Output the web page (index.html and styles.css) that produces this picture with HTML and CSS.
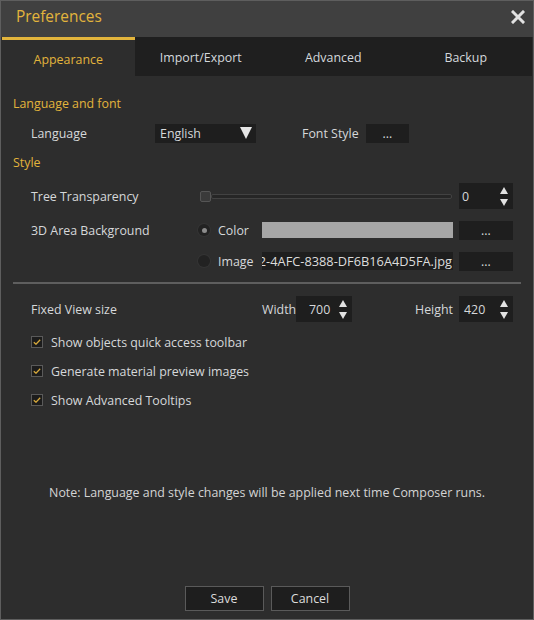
FILE: index.html
```html
<!DOCTYPE html>
<html>
<head>
<meta charset="utf-8">
<link rel="stylesheet" href="styles.css">
</head>
<body>
<div class="dialog">
  <div class="titlebar">
    <span class="title">Preferences</span>
    <svg class="close" width="14" height="14" viewBox="0 0 14 14"><path d="M2 2L12 12M12 2L2 12" stroke="#e2e2e2" stroke-width="3" stroke-linecap="square"/></svg>
  </div>
  <div class="tabs">
    <div class="tab active">Appearance</div>
    <div class="tab">Import/Export</div>
    <div class="tab">Advanced</div>
    <div class="tab">Backup</div>
  </div>
  <div class="content">
    <div class="section first">Language and font</div>
    <div class="row r-lang">
      <span class="label w-lang">Language</span>
      <div class="dropdown"><span>English</span><span class="tri"></span></div>
      <span class="label w-fs">Font Style</span>
      <div class="btn small">...</div>
    </div>
    <div class="section style">Style</div>
    <div class="row r-tree">
      <span class="label w-tree">Tree Transparency</span>
      <div class="slider"><span class="handle"></span><span class="track"></span></div>
      <div class="spin s-tree"><span>0</span><span class="arrows"><i class="up"></i><i class="down"></i></span></div>
    </div>
    <div class="row r-bg">
      <span class="label w-bg">3D Area Background</span>
      <span class="radio on"></span>
      <span class="label w-opt">Color</span>
      <div class="colorbar"></div>
      <div class="btn wide">...</div>
    </div>
    <div class="row r-img">
      <span class="label w-bg"></span>
      <span class="radio"></span>
      <span class="label w-opt">Image</span>
      <div class="field"><span>2-4AFC-8388-DF6B16A4D5FA.jpg</span></div>
      <div class="btn wide">...</div>
    </div>
    <div class="sep"></div>
    <div class="row r-fixed">
      <span class="label w-fixed">Fixed View size</span>
      <span class="label w-w">Width</span>
      <div class="spin s-w"><span>700</span><span class="arrows"><i class="up"></i><i class="down"></i></span></div>
      <span class="label w-h">Height</span>
      <div class="spin s-h"><span>420</span><span class="arrows"><i class="up"></i><i class="down"></i></span></div>
    </div>
    <div class="row check first-check"><span class="cb"><svg width="8" height="6" viewBox="0 0 8 6"><path d="M0.8 3.2L3 5.2L7.2 0.8" fill="none" stroke="#d8aa3c" stroke-width="1.3"/></svg></span><span class="label">Show objects quick access toolbar</span></div>
    <div class="row check"><span class="cb"><svg width="8" height="6" viewBox="0 0 8 6"><path d="M0.8 3.2L3 5.2L7.2 0.8" fill="none" stroke="#d8aa3c" stroke-width="1.3"/></svg></span><span class="label">Generate material preview images</span></div>
    <div class="row check"><span class="cb"><svg width="8" height="6" viewBox="0 0 8 6"><path d="M0.8 3.2L3 5.2L7.2 0.8" fill="none" stroke="#d8aa3c" stroke-width="1.3"/></svg></span><span class="label">Show Advanced Tooltips</span></div>
    <div class="note">Note: Language and style changes will be applied next time Composer runs.</div>
    <div class="spacer"></div>
    <div class="buttons">
      <div class="action">Save</div>
      <div class="action">Cancel</div>
    </div>
  </div>
</div>
</body>
</html>
```
FILE: styles.css
```css
html, body {
  margin: 0;
  padding: 0;
  background: #2d2d2d;
}
.dialog {
  width: 534px;
  height: 620px;
  box-sizing: border-box;
  border: 1px solid #5e5e5e;
  background: #2d2d2d;
  display: flex;
  flex-direction: column;
  font-family: "Open Sans", "Noto Sans", sans-serif;
  font-size: 12.4px;
  color: #d6d8da;
}
.titlebar {
  height: 36px;
  background: #404040;
  display: flex;
  align-items: center;
  justify-content: space-between;
  padding: 0 8px 5px 15px;
  box-sizing: border-box;
  flex-shrink: 0;
}
.title {
  color: #e2b43c;
  font-size: 15.4px;
}
.close {
  display: block;
  margin-top: 1px;
}
.tabs {
  display: flex;
  height: 39px;
  background: #1f1f1f;
  margin: 0 1px;
  flex-shrink: 0;
}
.tab {
  flex: 1;
  display: flex;
  align-items: center;
  justify-content: center;
  color: #d4d8dc;
  box-sizing: border-box;
  padding-top: 2px;
}
.tab.active {
  background: #2d2d2d;
  border-top: 3px solid #e2b43c;
  color: #e2b43c;
  padding-top: 2px;
}
.content {
  flex: 1;
  display: flex;
  flex-direction: column;
  padding: 0 12px 8px 12px;
}
.section {
  color: #e2b43c;
  height: 20px;
  line-height: 20px;
}
.section.first { margin-top: 18px; }
.section.style { margin-top: 10px; }
.row {
  display: flex;
  align-items: center;
  padding-left: 18px;
}
.label {
  flex-shrink: 0;
  white-space: nowrap;
}
.r-lang { height: 20px; margin-top: 9px; }
.w-lang { width: 124px; }
.dropdown {
  width: 101px;
  height: 19px;
  background: #1e1e1e;
  display: flex;
  align-items: center;
  justify-content: space-between;
  padding: 0 4px 0 5px;
  box-sizing: border-box;
}
.tri {
  width: 0;
  height: 0;
  border-left: 6px solid transparent;
  border-right: 6px solid transparent;
  border-top: 12px solid #e6e6e6;
}
.w-fs { width: 64px; margin-left: 46px; }
.btn {
  background: #1e1e1e;
  display: flex;
  align-items: center;
  justify-content: center;
  height: 19px;
  line-height: 1;
  padding-top: 3px;
  box-sizing: border-box;
}
.btn.small { width: 43px; }
.btn.wide { width: 54px; margin-left: 6px; height: 19px; }
.r-tree { height: 26px; margin-top: 10px; }
.w-tree { width: 169px; }
.slider {
  width: 252px;
  display: flex;
  align-items: center;
}
.handle {
  width: 11px;
  height: 11px;
  box-sizing: border-box;
  border: 1px solid #555;
  border-radius: 2px;
  background: #3a3a3a;
  flex-shrink: 0;
}
.track {
  flex: 1;
  height: 5px;
  box-sizing: border-box;
  border: 1px solid #424242;
  border-radius: 2px;
  background: #262626;
}
.spin {
  height: 26px;
  background: #1e1e1e;
  display: flex;
  align-items: center;
  justify-content: space-between;
  box-sizing: border-box;
  padding: 0 5px 0 3px;
}
.s-tree { width: 54px; margin-left: 7px; }
.s-w { width: 56px; padding-left: 13px; }
.s-h { width: 54px; padding-left: 5px; }
.arrows {
  display: flex;
  flex-direction: column;
  gap: 5px;
}
.arrows i {
  display: block;
  width: 0;
  height: 0;
  border-left: 4px solid transparent;
  border-right: 4px solid transparent;
}
.arrows .up { border-bottom: 7px solid #e2e2e2; }
.arrows .down { border-top: 7px solid #e2e2e2; }
.r-bg { height: 20px; margin-top: 11px; }
.r-img { height: 20px; margin-top: 11px; }
.w-bg { width: 167px; }
.radio {
  width: 12px;
  height: 12px;
  border-radius: 50%;
  background: #222;
  box-shadow: 0 0 0 1px #343434;
  display: flex;
  align-items: center;
  justify-content: center;
  flex-shrink: 0;
}
.radio.on::after {
  content: "";
  width: 5px;
  height: 5px;
  border-radius: 50%;
  background: #8c8c8c;
}
.w-opt { width: 44px; margin-left: 8px; }
.colorbar {
  width: 191px;
  height: 16px;
  background: #a6a6a6;
}
.field {
  width: 191px;
  height: 18px;
  background: #1e1e1e;
  overflow: hidden;
  display: flex;
  justify-content: flex-end;
  align-items: center;
  font-size: 12.8px;
  color: #dcdcdc;
  white-space: nowrap;
  padding-right: 1px;
  box-sizing: border-box;
}
.sep {
  height: 2px;
  background: #5e5e5e;
  margin: 11px 0 0 0;
  width: 508px;
}
.r-fixed { height: 24px; margin-top: 13px; }
.w-fixed { width: 231px; }
.w-w { width: 34px; }
.w-h { width: 44px; margin-left: 63px; }
.check { height: 20px; margin-top: 9px; }
.check.first-check { margin-top: 11px; }
.cb {
  width: 12px;
  height: 12px;
  box-sizing: border-box;
  border: 1px solid #5a5a5a;
  background: #1c1c1c;
  display: flex;
  align-items: center;
  justify-content: center;
  margin-right: 8px;
  flex-shrink: 0;
}
.cb svg { display: block; }
.note {
  text-align: center;
  margin-top: 73px;
  height: 20px;
  line-height: 20px;
  color: #d4d4d4;
}
.spacer { flex: 1; }
.buttons {
  display: flex;
  justify-content: center;
  gap: 7px;
}
.action {
  width: 79px;
  height: 25px;
  box-sizing: border-box;
  border: 1px solid #5a5a5a;
  background: #1e1e1e;
  display: flex;
  align-items: center;
  justify-content: center;
  color: #dcdcdc;
}
```
